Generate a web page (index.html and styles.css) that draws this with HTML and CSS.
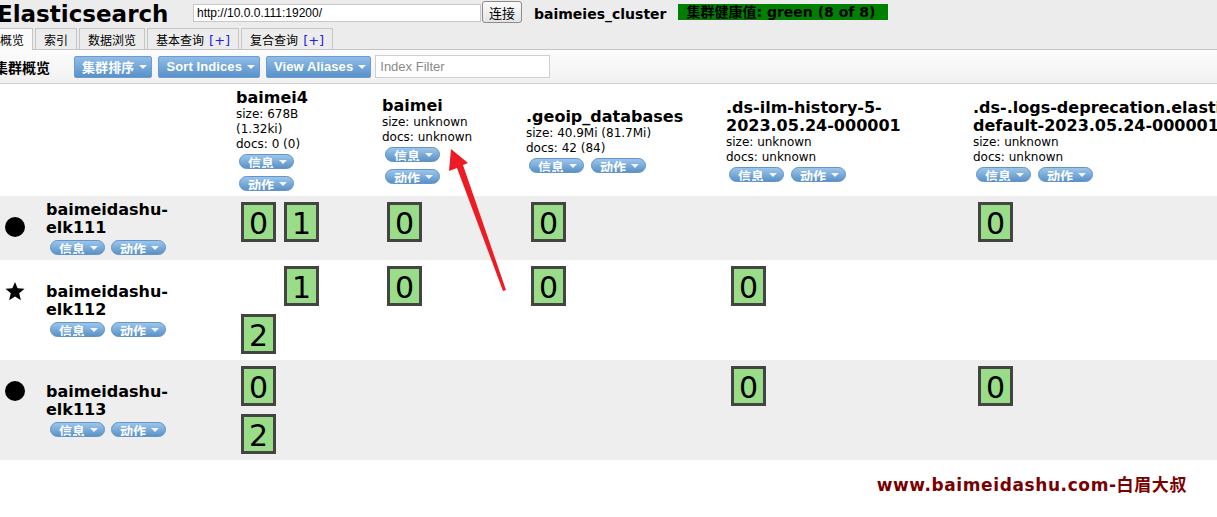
FILE: index.html
```html
<!DOCTYPE html>
<html lang="zh-CN">
<head>
    <meta charset="UTF-8">
    <meta name="viewport" content="width=device-width, initial-scale=1.0">
    <title>Elasticsearch</title>
    <link rel="stylesheet" href="styles.css">
</head>
<body>
<div class="page">
    <div class="header">
        <h1>Elasticsearch</h1>
        <input class="connect-url" type="text" value="http://10.0.0.111:19200/">
        <button class="connect-btn">连接</button>
        <span class="cluster-name">baimeies_cluster</span>
        <span class="cluster-health">集群健康值: green (8 of 8)</span>
    </div>

    <div class="tabs">
        <span class="tab active">概览</span>
        <span class="tab">索引</span>
        <span class="tab">数据浏览</span>
        <span class="tab">基本查询<em>[+]</em></span>
        <span class="tab">复合查询<em>[+]</em></span>
    </div>

    <div class="toolbar">
        <span class="toolbar-title">集群概览</span>
        <button class="menu-btn">集群排序<i class="caret"></i></button>
        <button class="menu-btn">Sort Indices<i class="caret"></i></button>
        <button class="menu-btn">View Aliases<i class="caret"></i></button>
        <input class="filter" type="text" placeholder="Index Filter">
    </div>

    <table class="overview">
        <colgroup>
            <col class="c-icon">
            <col class="c-node">
            <col class="c-i1">
            <col class="c-i2">
            <col class="c-i3">
            <col class="c-i4">
            <col class="c-i5">
        </colgroup>
        <thead>
            <tr>
                <th></th>
                <th></th>
                <th>
                    <div class="idx-head narrow">
                        <div class="idx-name">baimei4</div>
                        <div class="idx-stat">size: 678B (1.32ki)</div>
                        <div class="idx-stat">docs: 0 (0)</div>
                        <div class="actions">
                            <span class="pill">信息<i class="caret"></i></span>
                            <span class="pill">动作<i class="caret"></i></span>
                        </div>
                    </div>
                </th>
                <th>
                    <div class="idx-head narrow">
                        <div class="idx-name">baimei</div>
                        <div class="idx-stat">size: unknown</div>
                        <div class="idx-stat">docs: unknown</div>
                        <div class="actions">
                            <span class="pill">信息<i class="caret"></i></span>
                            <span class="pill">动作<i class="caret"></i></span>
                        </div>
                    </div>
                </th>
                <th>
                    <div class="idx-head">
                        <div class="idx-name">.geoip_databases</div>
                        <div class="idx-stat">size: 40.9Mi (81.7Mi)</div>
                        <div class="idx-stat">docs: 42 (84)</div>
                        <div class="actions">
                            <span class="pill">信息<i class="caret"></i></span>
                            <span class="pill">动作<i class="caret"></i></span>
                        </div>
                    </div>
                </th>
                <th>
                    <div class="idx-head">
                        <div class="idx-name">.ds-ilm-history-5-<br>2023.05.24-000001</div>
                        <div class="idx-stat">size: unknown</div>
                        <div class="idx-stat">docs: unknown</div>
                        <div class="actions">
                            <span class="pill">信息<i class="caret"></i></span>
                            <span class="pill">动作<i class="caret"></i></span>
                        </div>
                    </div>
                </th>
                <th>
                    <div class="idx-head">
                        <div class="idx-name">.ds-.logs-deprecation.elastic-<br>default-2023.05.24-000001</div>
                        <div class="idx-stat">size: unknown</div>
                        <div class="idx-stat">docs: unknown</div>
                        <div class="actions">
                            <span class="pill">信息<i class="caret"></i></span>
                            <span class="pill">动作<i class="caret"></i></span>
                        </div>
                    </div>
                </th>
            </tr>
        </thead>
        <tbody>
            <tr class="stripe">
                <td class="icon-cell"><span class="dot"></span></td>
                <td class="node-cell">
                    <div class="node-name">baimeidashu-elk111</div>
                    <div class="actions">
                        <span class="pill">信息<i class="caret"></i></span>
                        <span class="pill">动作<i class="caret"></i></span>
                    </div>
                </td>
                <td class="shard-cell"><div class="shards two"><div class="shard">0</div><div class="shard">1</div></div></td>
                <td class="shard-cell"><div class="shards"><div class="shard">0</div></div></td>
                <td class="shard-cell"><div class="shards"><div class="shard">0</div></div></td>
                <td class="shard-cell"></td>
                <td class="shard-cell"><div class="shards"><div class="shard">0</div></div></td>
            </tr>
            <tr>
                <td class="icon-cell">
                    <svg class="star" width="20" height="19" viewBox="0 0 20 19"><polygon points="10,0 12.6,6.3 19.5,6.8 14.2,11.2 15.9,18.2 10,14.4 4.1,18.2 5.8,11.2 0.5,6.8 7.4,6.3" fill="#000"/></svg>
                </td>
                <td class="node-cell">
                    <div class="node-name">baimeidashu-elk112</div>
                    <div class="actions">
                        <span class="pill">信息<i class="caret"></i></span>
                        <span class="pill">动作<i class="caret"></i></span>
                    </div>
                </td>
                <td class="shard-cell"><div class="shards two"><div class="slot"></div><div class="shard">1</div><div class="shard">2</div></div></td>
                <td class="shard-cell"><div class="shards"><div class="shard">0</div></div></td>
                <td class="shard-cell"><div class="shards"><div class="shard">0</div></div></td>
                <td class="shard-cell"><div class="shards"><div class="shard">0</div></div></td>
                <td class="shard-cell"></td>
            </tr>
            <tr class="stripe">
                <td class="icon-cell"><span class="dot"></span></td>
                <td class="node-cell">
                    <div class="node-name">baimeidashu-elk113</div>
                    <div class="actions">
                        <span class="pill">信息<i class="caret"></i></span>
                        <span class="pill">动作<i class="caret"></i></span>
                    </div>
                </td>
                <td class="shard-cell"><div class="shards two"><div class="shard">0</div><div class="slot"></div><div class="shard">2</div></div></td>
                <td class="shard-cell"></td>
                <td class="shard-cell"></td>
                <td class="shard-cell"><div class="shards"><div class="shard">0</div></div></td>
                <td class="shard-cell"><div class="shards"><div class="shard">0</div></div></td>
            </tr>
        </tbody>
    </table>

    <div class="watermark">www.baimeidashu.com-白眉大叔</div>

    <!-- red annotation arrow drawn over the page -->
    <svg class="annotation" width="1217" height="517" viewBox="0 0 1217 517">
        <polygon points="451,149 468,163 463,165 506,290 503,291 457,168 449,171" fill="#ed1c24"/>
    </svg>
</div>
</body>
</html>
```

FILE: styles.css
```css
html, body {
    margin: 0;
    padding: 0;
    overflow: hidden;
}

body {
    background: #fff;
    color: #000;
    font-family: "DejaVu Sans", "Noto Sans CJK SC", sans-serif;
}

.page {
    position: relative;
    height: 517px;
}

/* top bar */
.header {
    display: flex;
    align-items: flex-start;
    height: 28px;
    background: #ececec;
}

.header h1 {
    flex: none;
    width: 196px;
    margin: 0 0 0 -3px;
    font-size: 23px;
    line-height: 28px;
    font-weight: bold;
}

.connect-url {
    width: 288px;
    height: 18px;
    margin-top: 4px;
    padding: 0 3px;
    box-sizing: border-box;
    border: 1px solid #c8c8c8;
    font-family: "Liberation Sans", sans-serif;
    font-size: 12px;
    color: #000;
}

.connect-btn {
    width: 40px;
    height: 22px;
    margin: 1px 0 0 1px;
    padding: 0;
    border: 1px solid #8a8a8a;
    border-radius: 3px;
    background: linear-gradient(#fbfbfb, #e4e4e4);
    font-family: "Noto Sans CJK SC", sans-serif;
    font-size: 13px;
    color: #000;
}

.cluster-name {
    margin: 6px 0 0 12px;
    font-size: 14px;
    line-height: 16px;
    font-weight: bold;
}

.cluster-health {
    width: 210px;
    height: 16px;
    margin: 4px 0 0 12px;
    padding-left: 8px;
    box-sizing: border-box;
    background: #008000;
    font-size: 14px;
    line-height: 16px;
    font-weight: bold;
    white-space: nowrap;
}

/* tabs */
.tabs {
    display: flex;
    align-items: flex-end;
    gap: 2px;
    height: 21px;
    background: #ececec;
    border-bottom: 1px solid #c4c4c4;
}

.tab {
    height: 21px;
    padding: 2px 8px 0;
    box-sizing: border-box;
    border: 1px solid #c6c6c6;
    border-bottom: none;
    font-family: "Noto Sans CJK SC", sans-serif;
    font-size: 12px;
    line-height: 17px;
    color: #000;
    white-space: nowrap;
}

.tab:first-child {
    margin-left: -9px;
}

.tab.active {
    height: 22px;
    margin-bottom: -1px;
    background: #fafafa;
}

.tab em {
    margin-left: 5px;
    font-family: "DejaVu Sans", sans-serif;
    font-size: 13px;
    font-style: normal;
    color: #2424e0;
}

/* toolbar */
.toolbar {
    display: flex;
    align-items: center;
    gap: 6px;
    height: 33px;
    background: linear-gradient(#fcfcfc, #f1f1f1);
    border-bottom: 1px solid #d0d0d0;
}

.toolbar-title {
    width: 56px;
    margin: 0 18px 0 -6px;
    font-family: "Noto Sans CJK SC", sans-serif;
    font-size: 14px;
    font-weight: bold;
}

.menu-btn {
    display: flex;
    align-items: center;
    height: 22px;
    padding: 0 4px 0 7px;
    border: 1px solid #6b9bd0;
    border-radius: 2px;
    background: linear-gradient(#90bde6, #5891c9);
    color: #fff;
    font-family: "Liberation Sans", "Noto Sans CJK SC", sans-serif;
    font-size: 13px;
    font-weight: bold;
    letter-spacing: 0.1px;
    white-space: nowrap;
}

.menu-btn .caret {
    margin-left: 5px;
}

.caret {
    display: inline-block;
    width: 0;
    height: 0;
    border-left: 4px solid transparent;
    border-right: 4px solid transparent;
    border-top: 4px solid #f2f6fb;
}

.filter {
    width: 175px;
    height: 23px;
    margin-left: -2px;
    padding: 0 4px;
    box-sizing: border-box;
    border: 1px solid #cfcfcf;
    font-family: "Liberation Sans", sans-serif;
    font-size: 13px;
}

.filter::placeholder {
    color: #8a8a8a;
}

/* overview table */
.overview {
    width: 1370px;
    table-layout: fixed;
    border-collapse: collapse;
    border-spacing: 0;
}

.c-icon { width: 42px; }
.c-node { width: 191px; }
.c-i1 { width: 146px; }
.c-i2 { width: 144px; }
.c-i3 { width: 200px; }
.c-i4 { width: 247px; }
.c-i5 { width: 400px; }

.overview th {
    padding: 5px 3px;
    text-align: left;
    vertical-align: middle;
    font-weight: normal;
}

.idx-head.narrow {
    width: 100px;
}

.idx-name {
    font-size: 16px;
    line-height: 18px;
    font-weight: bold;
    white-space: nowrap;
}

.idx-stat {
    font-size: 12px;
    line-height: 15px;
}

.actions {
    display: flex;
    flex-wrap: wrap;
    gap: 7px 6px;
    margin: 2px 0 0 3px;
}

.overview th .actions {
    gap: 7px 7px;
}

.pill {
    display: inline-flex;
    align-items: flex-start;
    width: 55px;
    height: 15px;
    padding-left: 8px;
    box-sizing: border-box;
    overflow: hidden;
    border: 1px solid #6595c8;
    border-radius: 8px;
    background: linear-gradient(#9cc6ec, #5a92c7);
    color: #fff;
    font-family: "Noto Sans CJK SC", sans-serif;
    font-size: 13px;
    line-height: 16px;
    font-weight: bold;
}

.pill .caret {
    margin: 5px 0 0 5px;
}

.stripe {
    background: #eeeeee;
}

.icon-cell {
    vertical-align: top;
    padding: 21px 0 0 5px;
}

.dot {
    display: block;
    width: 20px;
    height: 20px;
    border-radius: 50%;
    background: #000;
}

.star {
    display: block;
    margin-top: 1px;
}

.node-cell {
    vertical-align: middle;
    padding: 5px 0 5px 4px;
}

.node-name {
    width: 140px;
    font-size: 16px;
    line-height: 18px;
    font-weight: bold;
}

.node-cell .actions {
    margin: 3px 0 0 4px;
}

.shard-cell {
    vertical-align: top;
    padding: 6px 3px;
}

.shards {
    display: grid;
    grid-template-columns: 35px;
    gap: 8px;
    margin-left: 5px;
}

.shards.two {
    grid-template-columns: 35px 35px;
}

.shard,
.slot {
    width: 35px;
    height: 40px;
    box-sizing: border-box;
}

.shard {
    border: 3px solid #444;
    background: #99dd88;
    font-size: 30px;
    line-height: 38px;
    text-align: center;
}

.watermark {
    margin-top: 11px;
    padding-right: 30px;
    text-align: right;
    color: #7a0000;
    font-family: "DejaVu Sans", "Noto Sans CJK SC", sans-serif;
    font-size: 17px;
    font-weight: bold;
    letter-spacing: 0.6px;
}

.annotation {
    position: absolute;
    top: 0;
    left: 0;
    pointer-events: none;
}
```
